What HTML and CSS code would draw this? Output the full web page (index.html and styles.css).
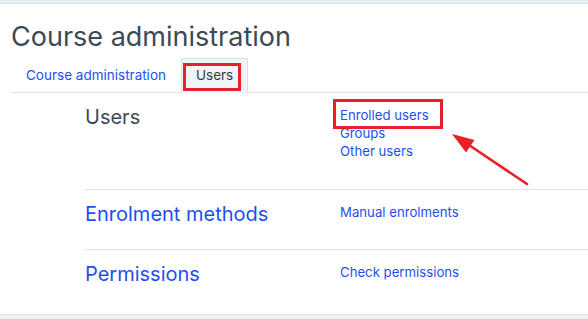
FILE: index.html
```html
<!DOCTYPE html>
<html lang="en">
<head>
<meta charset="utf-8">
<title>Course administration</title>
<link rel="stylesheet" href="styles.css">
</head>
<body>
<div class="topband"></div>
<main class="card">
  <h2 class="title">Course administration</h2>
  <nav class="tabs">
    <a class="tab" href="#">Course administration</a>
    <a class="tab active" href="#">Users<span class="mark mark-tab"></span></a>
  </nav>
  <section class="rows">
    <div class="row row-first">
      <h3 class="row-head">Users</h3>
      <ul class="links links-multi">
        <li class="has-mark"><a href="#">Enrolled users</a><span class="mark mark-link"></span></li>
        <li><a href="#">Groups</a></li>
        <li><a href="#">Other users</a></li>
      </ul>
    </div>
    <div class="row">
      <h3 class="row-head"><a href="#">Enrolment methods</a></h3>
      <ul class="links">
        <li><a href="#">Manual enrolments</a></li>
      </ul>
    </div>
    <div class="row">
      <h3 class="row-head"><a href="#">Permissions</a></h3>
      <ul class="links">
        <li><a href="#">Check permissions</a></li>
      </ul>
    </div>
  </section>
</main>
<div class="page-bg"></div>
<svg class="arrow" width="588" height="319" viewBox="0 0 588 319" aria-hidden="true">
  <line x1="527" y1="184" x2="466" y2="143" stroke="#e8202a" stroke-width="2.6" stroke-linecap="round"/>
  <polygon points="452,134 474.5,140 466,152.5" fill="#e8202a"/>
</svg>
</body>
</html>
```
FILE: styles.css
```css
* { box-sizing: border-box; }
html, body { margin: 0; padding: 0; }
body {
  position: relative;
  width: 588px;
  height: 319px;
  overflow: hidden;
  background: #edf2f5;
  font-family: Inter, "Noto Sans", sans-serif;
  color: #3b4a54;
}
a { color: #1e4ff2; text-decoration: none; }

.topband { height: 3px; background: #e7eef2; }

.card {
  background: #fff;
  border-top: 1px solid #d6dee3;
  border-bottom: 1px solid #dde4e8;
  padding: 17px 0 5px;
}

.title {
  margin: 0 0 0 11px;
  font-size: 27px;
  line-height: 32px;
  font-weight: 400;
  color: #3b4a54;
}

.tabs {
  display: flex;
  margin: 5px 0 0 11px;
  border-bottom: 1px solid #dee2e6;
}
.tab {
  position: relative;
  display: block;
  padding: 8px 14px 9px;
  border: 1px solid transparent;
  margin-bottom: -1px;
  font-size: 13.5px;
  line-height: 16px;
}
.tab.active {
  background: #eef4f8;
  border-color: #dee2e6 #dee2e6 #eef4f8;
  color: #343a40;
}

.mark {
  position: absolute;
  border: 3px solid #e8202a;
  pointer-events: none;
}
.mark-tab { left: 1px; top: 4px; width: 58px; height: 28px; }

.rows { margin-left: 85px; }
.row {
  display: grid;
  grid-template-columns: 255px 1fr;
  align-items: start;
  padding: 12px 0 23px;
  border-top: 1px solid #e1e4e7;
}
.row-first { border-top: 0; }
.row-head {
  margin: 0;
  font-size: 20px;
  line-height: 24px;
  font-weight: 400;
  color: #3b4a54;
}
.links {
  margin: 0;
  padding: 1px 0 0;
  list-style: none;
  font-size: 13.2px;
  line-height: 18px;
}
.links-multi { margin-bottom: 6px; }
.has-mark { position: relative; }
.mark-link { left: -7px; top: -7px; width: 110px; height: 30px; }

.page-bg { height: 10px; }

.arrow {
  position: absolute;
  left: 0;
  top: 0;
  pointer-events: none;
}
```
